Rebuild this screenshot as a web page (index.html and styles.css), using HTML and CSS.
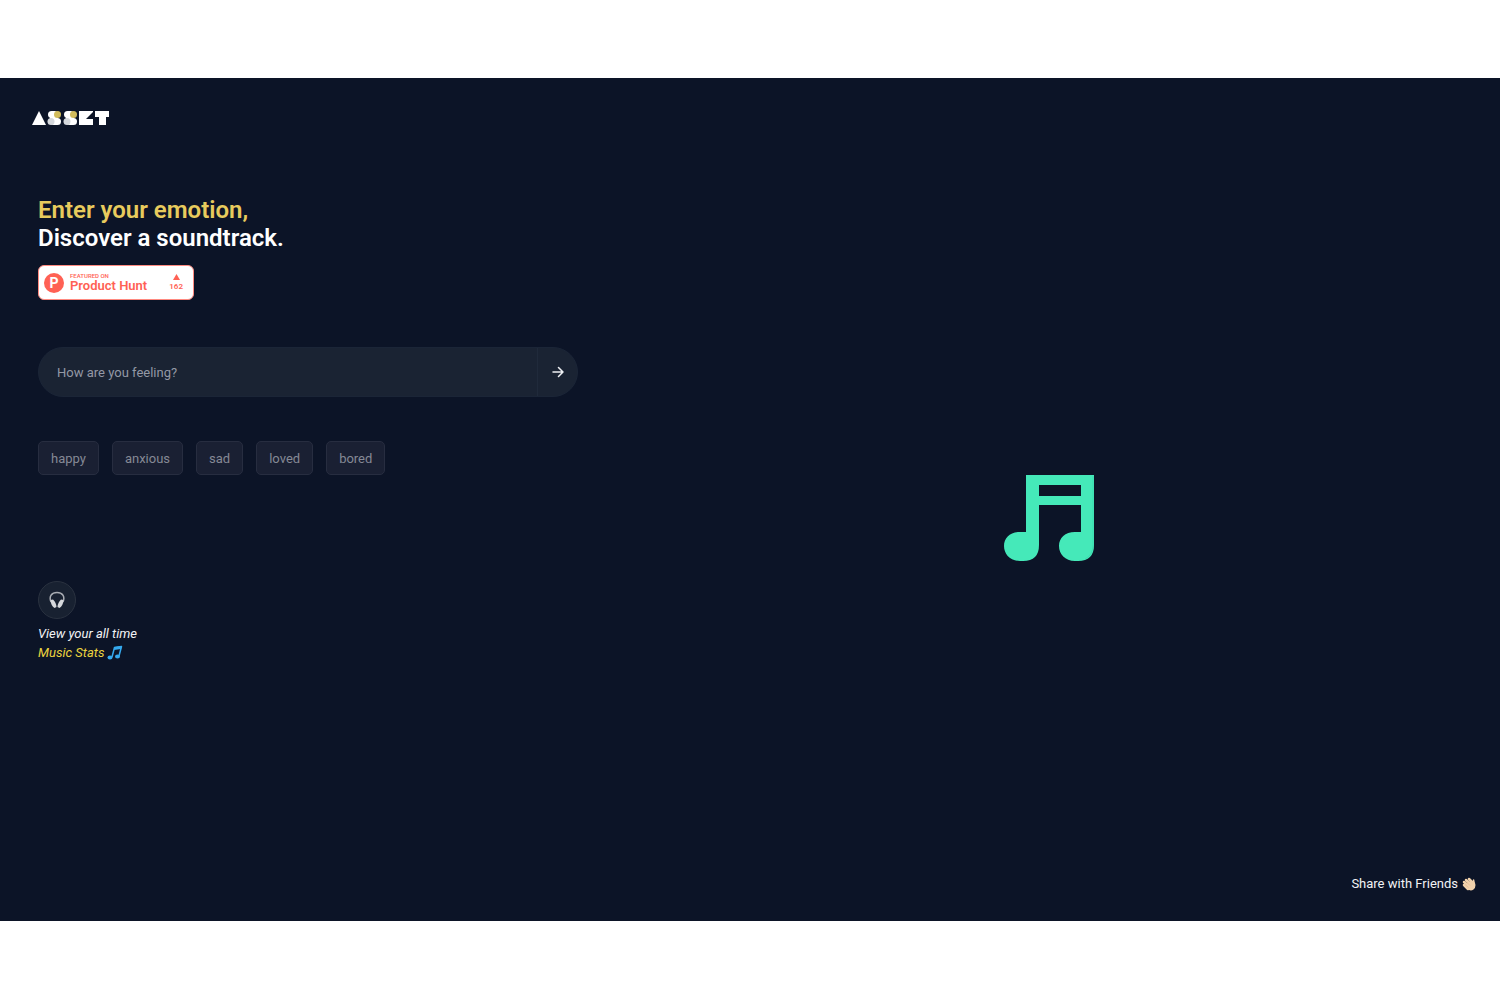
FILE: index.html
```html
<!DOCTYPE html>
<html lang="en">
<head>
    <meta charset="UTF-8">
    <meta name="viewport" content="width=device-width, initial-scale=1.0">
    <title>Asset - Discover a soundtrack</title>
    <link rel="stylesheet" href="styles.css">
</head>
<body>
    <div class="app">
        <header>
            <a href="#" class="logo" aria-label="Asset home">
                <svg width="78" height="14" viewBox="0 0 78 14">
                    <polygon points="0,14 7,0 14,14" fill="#fff"/>
                    <g id="logoMark">
                        <rect x="16" y="0" width="10" height="7" rx="3.5" fill="#fff"/>
                        <rect x="18" y="4" width="8" height="6" fill="#fff"/>
                        <rect x="18" y="7" width="11" height="7" rx="3.5" fill="#fff"/>
                        <circle cx="25.5" cy="3.5" r="3.5" fill="#d2bc5c"/>
                        <circle cx="19" cy="10.5" r="3.5" fill="#d5d8dc"/>
                    </g>
                    <use href="#logoMark" x="16"/>
                    <rect x="47" y="0" width="14" height="14" fill="#fff"/>
                    <polygon points="61,1 61,8 54,8" fill="#0c1427"/>
                    <rect x="63" y="0" width="14" height="6" fill="#fff"/>
                    <rect x="67" y="0" width="7" height="14" fill="#fff"/>
                </svg>
            </a>
        </header>

        <main>
            <section class="leftColumn">
                <h1><span>Enter your emotion,</span><br>Discover a soundtrack.</h1>

                <a href="#" class="productHunt">
                    <span class="phLogo">P</span>
                    <span class="phText">
                        <small>FEATURED ON</small>
                        <strong>Product Hunt</strong>
                    </span>
                    <span class="phVotes">
                        <svg width="7" height="6" viewBox="0 0 7 6"><polygon points="0,6 3.5,0 7,6" fill="#ff6154"/></svg>
                        162
                    </span>
                </a>

                <form class="searchForm" action="#">
                    <input type="text" id="feeling" placeholder="How are you feeling?" aria-label="How are you feeling?">
                    <button type="submit" aria-label="Search">
                        <svg width="12" height="12" viewBox="0 0 12 12" fill="none" stroke="#eef0f3" stroke-width="1.5" stroke-linecap="round" stroke-linejoin="round">
                            <path d="M1 6H11M6.5 1.5L11 6L6.5 10.5"/>
                        </svg>
                    </button>
                </form>

                <div class="emotions">
                    <button type="button">happy</button>
                    <button type="button">anxious</button>
                    <button type="button">sad</button>
                    <button type="button">loved</button>
                    <button type="button">bored</button>
                </div>

                <a href="#" class="stats">
                    <span class="statsIcon">
                        <svg width="16" height="18" viewBox="0 0 16 18">
                            <path d="M2 11C-.5 5 3 1.5 8 1.5S16.5 5 14 11" fill="none" stroke="#a9adb4" stroke-width="1.5"/>
                            <path d="M1.5 9L4 8.5Q7 11 7.5 16L5.5 17Q2 15 1.5 9Z" fill="#d6d8dc"/>
                            <path d="M14.5 9L12 8.5Q9 11 8.5 16L10.5 17Q14 15 14.5 9Z" fill="#d6d8dc"/>
                        </svg>
                    </span>
                    <span>View your all time</span>
                    <span class="statsLink">Music Stats
                        <svg width="16" height="15" viewBox="0 0 16 15">
                            <path d="M5 12L7.5 2.5L14.5 1.5L12 11" fill="none" stroke="#35a9ee" stroke-width="1.5" stroke-linejoin="round"/>
                            <path d="M7.5 2L15 1L14 4L7 5Z" fill="#35a9ee"/>
                            <ellipse cx="3" cy="12.5" rx="2.5" ry="2" fill="#35a9ee"/>
                            <ellipse cx="10.5" cy="11.5" rx="2.5" ry="2" fill="#35a9ee"/>
                        </svg>
                    </span>
                </a>
            </section>

            <section class="rightColumn">
                <svg width="92" height="88" viewBox="0 0 92 88">
                    <path fill="#45e9b9" fill-rule="evenodd" d="M22 1H90V71Q90 87 74 87H71C61 87 55 80 55 72C55 64 61 58 71 58H77V31H35V71Q35 87 19 87H16C6 87 0 80 0 72C0 64 6 58 16 58H22ZM35 11V22H77V11Z"/>
                    <path d="M89 2V71Q89 81 81 85" fill="none" stroke="#3cdcb0" stroke-width="1"/>
                </svg>
            </section>
        </main>

        <footer>
            <button type="button" class="share">Share with Friends
                <svg width="14" height="14" viewBox="0 0 14 14">
                    <path d="M2 5L6 9M4 3L9 8M7 2L11 6M2 8L6 12" stroke="#f1d2ac" stroke-width="2.5" stroke-linecap="round"/>
                    <path d="M4 7L9 3.5L10.5 5L11 2.5Q12.5 1.5 12.5 4L13.5 8Q13.5 11 11.5 12.5Q8.5 14.5 5.5 12Z" fill="#f1d2ac"/>
                    <path d="M4.5 5L8 8.5M3 7.5L6.5 10.5" stroke="#d6aa82" stroke-width=".5"/>
                </svg>
            </button>
        </footer>
    </div>
</body>
</html>
```
FILE: styles.css
```css
* {
    box-sizing: border-box;
}

body {
    margin: 0;
    padding: 78px 0 79px;
    background-color: #fff;
    font-family: Roboto, "Liberation Sans", sans-serif;
    font-size: 13px;
    line-height: 19px;
}

a {
    color: inherit;
    text-decoration: none;
}

button, input {
    font: inherit;
    color: inherit;
}

button {
    cursor: pointer;
}

.app {
    display: flex;
    flex-direction: column;
    min-height: calc(100vh - 157px);
    background-color: #0c1427;
    color: #f2f3f5;
}

header {
    padding: 33px 32px 35px;
}

.logo, .logo svg {
    display: block;
    width: 78px;
}

main {
    display: grid;
    grid-template-columns: 2fr 3fr;
    flex: 1;
}

.leftColumn {
    padding: 36px 22px 0 38px;
}

.rightColumn {
    display: flex;
    align-items: center;
    justify-content: center;
}

h1 {
    margin: 0 0 13px;
    font-size: 24px;
    line-height: 28px;
    font-weight: 600;
    color: #fff;
}

h1 span {
    color: #e8cb5d;
}

/* product hunt badge */
.productHunt {
    display: flex;
    align-items: center;
    width: 156px;
    height: 35px;
    padding: 0 10px 0 5px;
    border: 1px solid #ff8a80;
    border-radius: 6px;
    background-color: #fff;
    color: #ff6154;
}

.phLogo {
    width: 20px;
    height: 20px;
    margin-right: 6px;
    border-radius: 50%;
    background-color: #ff6154;
    color: #fff;
    font-size: 14px;
    line-height: 20px;
    font-weight: 700;
    text-align: center;
}

.phText {
    display: flex;
    flex-direction: column;
    flex: 1;
}

.phText small {
    font-size: 6px;
    line-height: 6px;
    font-weight: 500;
}

.phText strong {
    font-size: 13px;
    line-height: 14px;
    font-weight: 600;
}

.phVotes {
    display: flex;
    flex-direction: column;
    align-items: center;
    gap: 2px;
    font-size: 8px;
    line-height: 10px;
    font-weight: 600;
}

/* search box */
.searchForm {
    display: flex;
    height: 50px;
    margin-top: 47px;
    border: 1px solid #1b2537;
    border-radius: 25px;
    background-color: #1a2333;
    overflow: hidden;
}

.searchForm input {
    flex: 1;
    min-width: 0;
    padding: 0 18px;
    border: none;
    outline: none;
    background: none;
}

.searchForm input::placeholder {
    color: #9398a5;
    opacity: 1;
}

.searchForm button {
    display: flex;
    align-items: center;
    justify-content: center;
    width: 40px;
    padding: 0;
    border: none;
    border-left: 1px solid #202a3b;
    background: none;
}

/* emotion buttons */
.emotions {
    display: flex;
    flex-wrap: wrap;
    gap: 13px;
    margin-top: 44px;
}

.emotions button {
    height: 34px;
    padding: 0 12px;
    border: 1px solid #272d40;
    border-radius: 5px;
    background-color: #1a2033;
    color: #858995;
}

/* music stats */
.stats {
    display: flex;
    flex-direction: column;
    align-items: flex-start;
    margin-top: 106px;
    font-style: italic;
}

.statsIcon {
    display: flex;
    align-items: center;
    justify-content: center;
    width: 38px;
    height: 38px;
    margin-bottom: 5px;
    border: 1px solid #2a3240;
    border-radius: 50%;
    background-color: #182131;
}

.statsLink {
    display: flex;
    align-items: center;
    gap: 3px;
    color: #ecd43f;
}

footer {
    display: flex;
    justify-content: flex-end;
    padding: 0 24px 29px;
}

.share {
    display: flex;
    align-items: center;
    gap: 4px;
    padding: 0;
    border: none;
    background: none;
    line-height: 16px;
}
```
